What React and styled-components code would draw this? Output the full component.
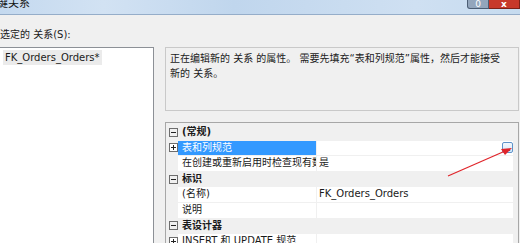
import React from "react";
import styled, { createGlobalStyle } from "styled-components";

const Global = createGlobalStyle`
  html, body {
    margin: 0;
    padding: 0;
    background: #f0f0f0;
  }
  body {
    font-family: "DejaVu Sans", "Noto Sans CJK SC", sans-serif;
    font-size: 10px;
    color: #1a1a1a;
  }
`;

const Window = styled.div`
  position: relative;
  width: 520px;
  height: 243px;
  overflow: hidden;
  display: flex;
  flex-direction: column;
  background: #f0f0f0;
`;

const TitleBar = styled.div`
  height: 14px;
  flex: none;
  display: flex;
  justify-content: space-between;
  align-items: flex-start;
  background: linear-gradient(90deg, #c4d9ef 0%, #d2e2f3 20%, #c0d6ed 45%, #cfe0f2 80%, #c6dbef 100%);
  border-bottom: 1px solid #95adc9;
`;

const Title = styled.div`
  margin-top: -3px;
  margin-left: -3px;
  font-size: 11px;
  line-height: 13px;
  color: #111;
`;

const Controls = styled.div`
  display: flex;
`;

const MinButton = styled.div`
  width: 22px;
  height: 9px;
  box-sizing: border-box;
  border: 1px solid #4c5e74;
  border-top: none;
  border-radius: 0 0 0 3px;
  background-color: #93a6bc;
  display: flex;
  justify-content: center;
  align-items: flex-end;
  color: #fff;
  font-size: 9px;
  line-height: 8px;
  overflow: hidden;
`;

const CloseButton = styled(MinButton)`
  width: 31px;
  border-color: #7d2219;
  border-left: none;
  border-radius: 0;
  background-color: #c7392b;
  font-weight: bold;
`;

const Body = styled.div`
  flex: 1;
  display: flex;
  flex-direction: column;
  padding-top: 13px;
  min-height: 0;
`;

const Label = styled.div`
  line-height: 14px;
  height: 14px;
  margin-bottom: 5px;
  white-space: nowrap;
`;

const Main = styled.div`
  flex: 1;
  display: flex;
  gap: 11px;
  min-height: 0;
`;

const ListBox = styled.div`
  margin-left: -2px;
  width: 156px;
  flex: none;
  box-sizing: border-box;
  background: #fff;
  border: 1px solid #8c9096;
  border-bottom: none;
  padding: 2px 0 0 4px;
`;

const ListItem = styled.div`
  display: inline-block;
  background: ${(p) => (p.$selected ? "#ebebeb" : "transparent")};
  padding: 0 2px;
  line-height: 15px;
  white-space: nowrap;
`;

const Right = styled.div`
  flex: 1;
  display: flex;
  flex-direction: column;
  gap: 11px;
  margin-right: 1px;
  min-width: 0;
`;

const Desc = styled.div`
  height: 64px;
  flex: none;
  box-sizing: border-box;
  border: 1px solid #c9c9c9;
  padding: 3px 4px;
  line-height: 15px;
  background: #f0f0f0;
  overflow: hidden;
`;

const DescLine = styled.div`
  white-space: nowrap;
`;

const Grid = styled.div`
  flex: 1;
  display: flex;
  flex-direction: column;
  gap: 1px;
  border: 1px solid #a7a7a7;
  border-bottom: none;
  background: #f0f0f0;
  padding-top: 2px;
  overflow: hidden;
`;

const Row = styled.div`
  height: 14.6px;
  flex: none;
  display: grid;
  grid-template-columns: 12px 139px 1fr;
  line-height: 14.6px;
  font-weight: ${(p) => (p.$cat ? "bold" : "normal")};
`;

const Gutter = styled.div`
  display: flex;
  align-items: center;
  padding-left: 3px;
`;

const Toggle = styled.div`
  width: 9px;
  height: 9px;
  box-sizing: border-box;
  border: 1px solid #6d6d6d;
  position: relative;
  background: ${(p) => (p.$filled ? "#fff" : "transparent")};
  &::before {
    content: "";
    position: absolute;
    left: 1px;
    right: 1px;
    top: 3px;
    height: 1px;
    background: #222;
  }
  &::after {
    content: "";
    display: ${(p) => (p.$plus ? "block" : "none")};
    position: absolute;
    top: 1px;
    bottom: 1px;
    left: 3px;
    width: 1px;
    background: #222;
  }
`;

const CatName = styled.div`
  grid-column: 2 / 4;
  padding-left: 4px;
  white-space: nowrap;
`;

const Name = styled.div`
  background: ${(p) => (p.$selected ? "#3399ff" : "#fff")};
  color: ${(p) => (p.$selected ? "#fff" : "#1a1a1a")};
  padding-left: 4px;
  margin-right: 1px;
  white-space: nowrap;
  overflow: hidden;
`;

const Value = styled.div`
  background: #fff;
  margin-right: 5px;
  padding-left: 2px;
  display: flex;
  align-items: center;
  justify-content: space-between;
  white-space: nowrap;
  overflow: hidden;
`;

const DotsButton = styled.div`
  width: 11px;
  height: 11px;
  flex: none;
  box-sizing: border-box;
  border: 1px solid #5f93c9;
  border-radius: 2px;
  background: linear-gradient(#f3f8fd, #d6e8f9);
  display: flex;
  align-items: flex-end;
  justify-content: center;
  font-size: 8px;
  line-height: 7px;
  letter-spacing: -1px;
  color: #111;
`;

const Arrow = styled.svg`
  position: absolute;
  left: 0;
  top: 0;
  pointer-events: none;
`;

const Category = ({ label }) => (
  <Row $cat>
    <Gutter>
      <Toggle />
    </Gutter>
    <CatName>{label}</CatName>
  </Row>
);

const Prop = ({ name, value, expandable, selected, button }) => (
  <Row>
    <Gutter>{expandable && <Toggle $plus $filled />}</Gutter>
    <Name $selected={selected}>{name}</Name>
    <Value>
      <span>{value}</span>
      {button && <DotsButton>...</DotsButton>}
    </Value>
  </Row>
);

export default function App() {
  return (
    <>
      <Global />
      <Window>
        <TitleBar>
          <Title>键关系</Title>
          <Controls>
            <MinButton>0</MinButton>
            <CloseButton>x</CloseButton>
          </Controls>
        </TitleBar>
        <Body>
          <Label>选定的 关系(S):</Label>
          <Main>
            <ListBox>
              <ListItem $selected>FK_Orders_Orders*</ListItem>
            </ListBox>
            <Right>
              <Desc>
                <DescLine>
                  正在编辑新的 关系 的属性。 需要先填充“表和列规范”属性，然后才能接受
                </DescLine>
                <DescLine>新的 关系。</DescLine>
              </Desc>
              <Grid>
                <Category label="(常规)" />
                <Prop name="表和列规范" expandable selected button />
                <Prop name="在创建或重新启用时检查现有数据" value="是" />
                <Category label="标识" />
                <Prop name="(名称)" value="FK_Orders_Orders" />
                <Prop name="说明" value="" />
                <Category label="表设计器" />
                <Prop name="INSERT 和 UPDATE 规范" expandable />
              </Grid>
            </Right>
          </Main>
        </Body>
        <Arrow width="520" height="243" viewBox="0 0 520 243">
          <line x1="448" y1="176" x2="504" y2="151.5" stroke="#e0242a" strokeWidth="1.2" />
          <polygon points="512,148 501,149 505,155" fill="#e0242a" />
        </Arrow>
      </Window>
    </>
  );
}
